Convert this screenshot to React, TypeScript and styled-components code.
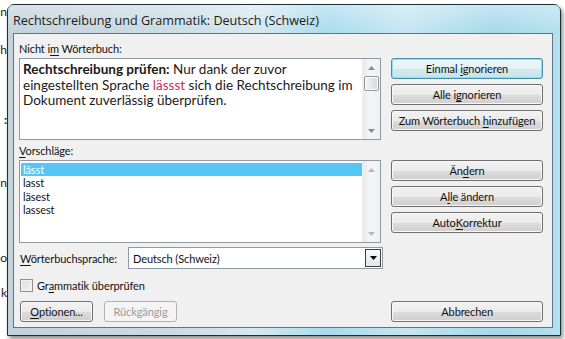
import React from 'react';
import styled, { createGlobalStyle, css } from 'styled-components';

const GlobalStyle = createGlobalStyle`
  html, body {
    margin: 0;
    padding: 0;
    background: #ffffff;
  }
  body {
    width: 565px;
    height: 339px;
    overflow: hidden;
    font-family: Lato, 'Open Sans', sans-serif;
  }
`;

const uiFont = `Lato, 'Open Sans', sans-serif`;

const Page = styled.div`
  position: relative;
  width: 565px;
  height: 339px;
  overflow: hidden;
  background: #ffffff;
`;

// the document behind the dialog, only a few letters of it show
const Doc = styled.div`
  display: flex;
  flex-direction: column;
  width: 7px;
  overflow: hidden;
  font-family: Lato, sans-serif;
  font-size: 12px;
  color: #222;
`;

const DocLine = styled.div<{ $gap: number; $bold?: boolean }>`
  margin-top: ${(p) => p.$gap}px;
  height: 16px;
  line-height: 16px;
  text-align: right;
  font-weight: ${(p) => (p.$bold ? 700 : 400)};
`;

const Window = styled.div`
  position: absolute;
  left: 7px;
  top: 4px;
  width: 552px;
  height: 330px;
  display: flex;
  flex-direction: column;
  border: 1px solid #1f2d36;
  border-radius: 7px 7px 0 0;
  background: linear-gradient(
    to right,
    #c3d2da 0%,
    #cbdbe4 30%,
    #d6e8f0 45%,
    #a8dbed 58%,
    #c4e6f2 72%,
    #a6d8ea 88%,
    #b3dfee 100%
  );
  box-shadow: 2px 3px 4px rgba(0, 0, 0, 0.45);
`;

const TitleBar = styled.div`
  height: 28px;
  display: flex;
  align-items: center;
  padding: 3px 0 0 5px;
  box-sizing: border-box;
  font-family: 'Open Sans', sans-serif;
  font-size: 12.6px;
  color: #1b1b1b;
  background: linear-gradient(to bottom, rgba(255, 255, 255, 0.35), rgba(255, 255, 255, 0));
`;

const Client = styled.div`
  flex: 1;
  margin: 0 7px 7px 5px;
  border: 1px solid #5d7686;
  background: #f0f0f0;
  padding: 7px 9px 0 5px;
  display: flex;
  flex-direction: column;
  font-family: ${uiFont};
  font-size: 11px;
  letter-spacing: -0.1px;
  color: #111;
`;

const Row = styled.div<{ $mt?: number }>`
  display: flex;
  gap: 10px;
  margin-top: ${(p) => p.$mt ?? 0}px;
`;

const LeftCol = styled.div`
  width: 362px;
  display: flex;
  flex-direction: column;
`;

const RightCol = styled.div`
  width: 152px;
  display: flex;
  flex-direction: column;
  gap: 5px;
`;

const Label = styled.div<{ $mt?: number }>`
  height: 16px;
  line-height: 16px;
  margin-top: ${(p) => p.$mt ?? 0}px;
  white-space: nowrap;
`;

const U = styled.span`
  text-decoration: underline;
  text-underline-offset: 2px;
`;

const Field = styled.div<{ $h: number }>`
  height: ${(p) => p.$h}px;
  border: 1px solid #8e9aa3;
  background: #ffffff;
  display: flex;
`;

const FieldBody = styled.div`
  flex: 1;
  overflow: hidden;
`;

const Prose = styled.div`
  padding: 3px 0 0 3px;
  font-family: Lato, 'Open Sans', sans-serif;
  font-size: 13.5px;
  letter-spacing: 0;
  line-height: 15.7px;
  color: #1a1a1a;
  white-space: nowrap;
  b {
    font-weight: 700;
  }
`;

const Wrong = styled.span`
  color: #c53356;
`;

const Scrollbar = styled.div`
  width: 17px;
  display: flex;
  flex-direction: column;
  background: linear-gradient(to right, #e9e9e9, #f5f5f5 40%, #f1f1f1);
  border-left: 1px solid #f0f0f0;
`;

const ArrowCell = styled.div`
  height: 17px;
  display: flex;
  align-items: center;
  justify-content: center;
`;

const Track = styled.div`
  flex: 1;
  display: flex;
  flex-direction: column;
  align-items: center;
`;

const Thumb = styled.div`
  width: 13px;
  height: 13px;
  border: 1px solid #979797;
  border-radius: 2px;
  background: linear-gradient(to right, #f5f5f5, #e6e6e6 50%, #d9d9d9);
  box-shadow: inset 0 0 0 1px #fbfbfb;
`;

const Arrow = ({ down, color }: { down?: boolean; color: string }): JSX.Element => (
  <svg width="7" height="4" viewBox="0 0 7 4">
    <path d={down ? 'M0 0 L7 0 L3.5 4 Z' : 'M0 4 L7 4 L3.5 0 Z'} fill={color} />
  </svg>
);

const List = styled.div`
  padding: 2px 0 0 1px;
  display: flex;
  flex-direction: column;
`;

const Item = styled.div<{ $selected?: boolean }>`
  height: 13.3px;
  line-height: 13.3px;
  padding-left: 2px;
  white-space: nowrap;
  ${(p) =>
    p.$selected &&
    css`
      background: #55c6f6;
      color: #ffffff;
    `}
`;

const Button = styled.div<{ $default?: boolean; $disabled?: boolean; $w?: number }>`
  box-sizing: border-box;
  height: 21px;
  width: ${(p) => (p.$w ? `${p.$w}px` : '100%')};
  display: flex;
  align-items: center;
  justify-content: center;
  border: 1px solid #707070;
  border-radius: 3px;
  background: linear-gradient(to bottom, #f2f2f2 0%, #ebebeb 50%, #dddddd 51%, #cfcfcf 100%);
  box-shadow: inset 0 0 0 1px #f8f8f8;
  white-space: nowrap;
  color: #111;
  ${(p) =>
    p.$default &&
    css`
      border-color: #3f93ac;
      background: linear-gradient(to bottom, #eef7f9 0%, #e2f1f5 50%, #d2e9ef 51%, #c7e3ea 100%);
      box-shadow: inset 0 0 0 1px #8fe0f2;
    `}
  ${(p) =>
    p.$disabled &&
    css`
      border-color: #adb2b5;
      background: #f4f4f4;
      box-shadow: none;
      color: #9a9a9a;
    `}
`;

const LangRow = styled.div`
  display: flex;
  align-items: center;
  margin-top: 4px;
  height: 22px;
`;

const LangLabel = styled.div`
  width: 108px;
  padding-left: 1px;
  white-space: nowrap;
`;

const Combo = styled.div`
  box-sizing: border-box;
  width: 255px;
  height: 22px;
  border: 1px solid #8e9aa3;
  background: #ffffff;
  display: flex;
  align-items: center;
  padding: 0 1px 0 4px;
`;

const ComboText = styled.div`
  flex: 1;
  white-space: nowrap;
`;

const DropButton = styled.div`
  width: 16px;
  height: 18px;
  box-sizing: border-box;
  border: 1px solid #404040;
  background: linear-gradient(to bottom, #fafafa, #e4e4e4);
  display: flex;
  align-items: center;
  justify-content: center;
`;

const CheckRow = styled.div`
  display: flex;
  align-items: center;
  gap: 4px;
  margin-top: 8px;
  height: 17px;
  padding-left: 1px;
`;

const Checkbox = styled.div`
  width: 13px;
  height: 13px;
  box-sizing: border-box;
  border: 1px solid #8e8f8f;
  background: linear-gradient(135deg, #dcdcdc, #f6f6f6);
  box-shadow: inset 0 0 0 1px #f4f4f4;
`;

const BottomRow = styled.div`
  display: flex;
  gap: 10px;
  margin-top: 7px;
`;

const BottomLeft = styled.div`
  width: 362px;
  display: flex;
  gap: 11px;
  padding-left: 1px;
`;

const docLines = [
  { gap: 4, text: 'n' },
  { gap: 22, text: 'h' },
  { gap: 54, text: ':', bold: true },
  { gap: 47, text: 'n' },
  { gap: 59, text: 'o' },
  { gap: 19, text: 'k' },
];

const suggestions = ['lässt', 'lasst', 'läsest', 'lassest'];

const App = (): JSX.Element => (
  <Page>
    <GlobalStyle />
    <Doc>
      {docLines.map((l, i) => (
        <DocLine key={i} $gap={l.gap} $bold={l.bold}>
          {l.text}
        </DocLine>
      ))}
    </Doc>
    <Window>
      <TitleBar>Rechtschreibung und Grammatik: Deutsch (Schweiz)</TitleBar>
      <Client>
        <Label>
          Nicht i<U>m</U> Wörterbuch:
        </Label>
        <Row $mt={1}>
          <LeftCol>
            <Field $h={80}>
              <FieldBody>
                <Prose>
                  <b>Rechtschreibung prüfen:</b> Nur dank der zuvor
                  <br />
                  eingestellten Sprache <Wrong>lässst</Wrong> sich die Rechtschreibung im
                  <br />
                  Dokument zuverlässig überprüfen.
                </Prose>
              </FieldBody>
              <Scrollbar>
                <ArrowCell>
                  <Arrow color="#8a8a8a" />
                </ArrowCell>
                <Track>
                  <Thumb />
                </Track>
                <ArrowCell>
                  <Arrow down color="#8a8a8a" />
                </ArrowCell>
              </Scrollbar>
            </Field>
          </LeftCol>
          <RightCol>
            <Button $default>
              Einmal&nbsp;<U>i</U>gnorieren
            </Button>
            <Button>
              Alle i<U>g</U>norieren
            </Button>
            <Button>
              Zum Wörterbuch&nbsp;<U>h</U>inzufügen
            </Button>
          </RightCol>
        </Row>
        <Label $mt={3}>
          <U>V</U>orschläge:
        </Label>
        <Row $mt={1}>
          <LeftCol>
            <Field $h={81}>
              <FieldBody>
                <List>
                  {suggestions.map((s, i) => (
                    <Item key={s} $selected={i === 0}>
                      {s}
                    </Item>
                  ))}
                </List>
              </FieldBody>
              <Scrollbar>
                <ArrowCell>
                  <Arrow color="#b8b8b8" />
                </ArrowCell>
                <Track />
                <ArrowCell>
                  <Arrow down color="#b8b8b8" />
                </ArrowCell>
              </Scrollbar>
            </Field>
          </LeftCol>
          <RightCol>
            <Button>
              Än<U>d</U>ern
            </Button>
            <Button>
              A<U>l</U>le ändern
            </Button>
            <Button>
              Auto<U>K</U>orrektur
            </Button>
          </RightCol>
        </Row>
        <LangRow>
          <LangLabel>
            <U>W</U>örterbuchsprache:
          </LangLabel>
          <Combo>
            <ComboText>Deutsch (Schweiz)</ComboText>
            <DropButton>
              <Arrow down color="#000" />
            </DropButton>
          </Combo>
        </LangRow>
        <CheckRow>
          <Checkbox />
          <span>
            Gr<U>a</U>mmatik überprüfen
          </span>
        </CheckRow>
        <BottomRow>
          <BottomLeft>
            <Button $w={73}>
              <U>O</U>ptionen...
            </Button>
            <Button $w={73} $disabled>
              Rückgängig
            </Button>
          </BottomLeft>
          <RightCol>
            <Button>Abbrechen</Button>
          </RightCol>
        </BottomRow>
      </Client>
    </Window>
  </Page>
);

export default App;
